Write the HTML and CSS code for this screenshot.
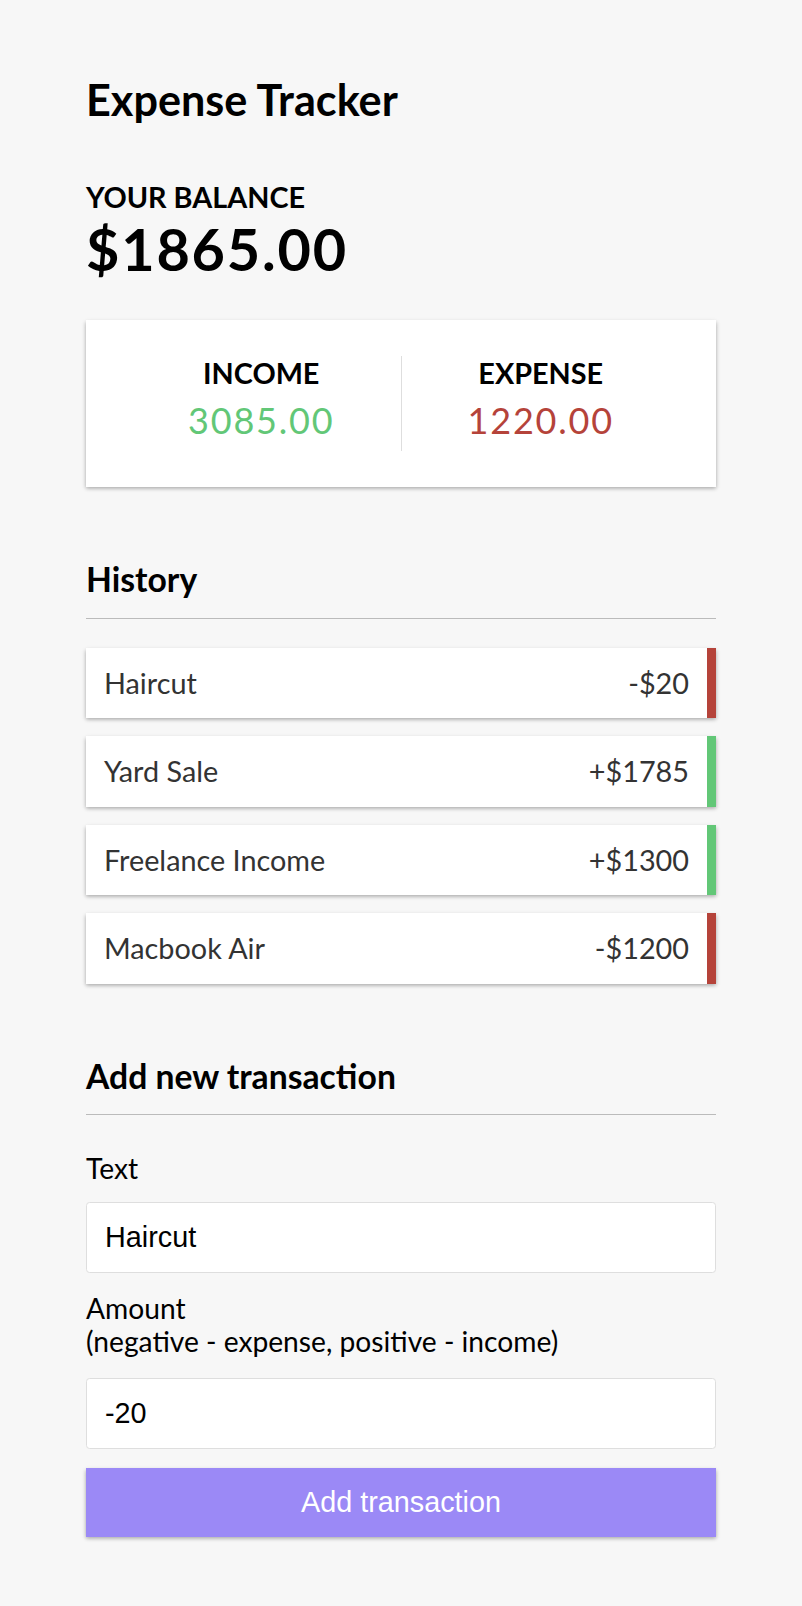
FILE: index.html
```html
<!DOCTYPE html>
<html lang="en">
<head>
<meta charset="UTF-8">
<title>Expense Tracker</title>
<link rel="stylesheet" href="styles.css">
</head>
<body>
<div class="page">
  <h2 class="title">Expense Tracker</h2>
  <div class="container">
    <h4 class="label-upper">Your Balance</h4>
    <h1 class="balance">$1865.00</h1>

    <div class="inc-exp">
      <div class="inc-exp-col first">
        <h4 class="label-upper">Income</h4>
        <p class="money plus">3085.00</p>
      </div>
      <div class="inc-exp-col">
        <h4 class="label-upper">Expense</h4>
        <p class="money minus">1220.00</p>
      </div>
    </div>

    <h3 class="section-title">History</h3>
    <ul class="list">
      <li class="item minus"><span>Haircut</span><span>-$20</span></li>
      <li class="item plus"><span>Yard Sale</span><span>+$1785</span></li>
      <li class="item plus"><span>Freelance Income</span><span>+$1300</span></li>
      <li class="item minus"><span>Macbook Air</span><span>-$1200</span></li>
    </ul>

    <h3 class="section-title">Add new transaction</h3>
    <form class="form">
      <div class="form-control">
        <label class="field-label" for="text">Text</label>
        <input class="field" type="text" id="text" value="Haircut">
      </div>
      <div class="form-control">
        <label class="field-label two-line" for="amount">Amount<br>(negative - expense, positive - income)</label>
        <input class="field" type="text" id="amount" value="-20">
      </div>
      <button class="btn" type="button">Add transaction</button>
    </form>
  </div>
</div>
</body>
</html>
```
FILE: styles.css
```css
* {
  box-sizing: border-box;
}

body {
  margin: 0;
  background-color: #f7f7f7;
  font-family: "Lato", "Noto Sans", sans-serif;
  font-size: 28.8px;
  color: #000;
}

.page {
  width: 630px;
  margin: 0 auto;
  padding: 74px 0 54px;
}

.title {
  margin: 0;
  font-size: 43.2px;
  font-weight: 700;
  line-height: 1.2;
}

.container {
  margin-top: 54px;
}

.label-upper {
  margin: 0;
  font-size: 28.8px;
  font-weight: 700;
  line-height: 1.2;
  text-transform: uppercase;
}

.balance {
  margin: 0;
  font-size: 57.6px;
  font-weight: 700;
  letter-spacing: 1.8px;
  line-height: 1.2;
}

.inc-exp {
  display: flex;
  background-color: #fff;
  box-shadow: 0 1.8px 5.4px rgba(0, 0, 0, 0.12), 0 1.8px 3.6px rgba(0, 0, 0, 0.24);
  padding: 36px;
  margin: 36px 0;
}

.inc-exp-col {
  flex: 1;
  text-align: center;
}

.inc-exp-col.first {
  border-right: 1.8px solid #dedede;
}

.money {
  font-size: 36px;
  letter-spacing: 1.8px;
  line-height: 1.2;
  margin: 9px 0;
}

.money.plus {
  color: #62c777;
}

.money.minus {
  color: #b5433a;
}

.section-title {
  font-size: 33.7px;
  font-weight: 700;
  line-height: 1.2;
  border-bottom: 1.8px solid #bbb;
  padding-bottom: 18px;
  margin: 72px 0 18px;
}

.list {
  list-style: none;
  padding: 0;
  margin: 29px 0 72px;
  display: flex;
  flex-direction: column;
  gap: 18px;
}

.item {
  display: flex;
  justify-content: space-between;
  background-color: #fff;
  color: #333;
  box-shadow: 0 1.8px 5.4px rgba(0, 0, 0, 0.12), 0 1.8px 3.6px rgba(0, 0, 0, 0.24);
  padding: 18px 18px;
  font-size: 28.8px;
  line-height: 1.2;
}

.item.plus {
  border-right: 9px solid #62c777;
}

.item.minus {
  border-right: 9px solid #b5433a;
}

.form {
  margin: 0;
}

.form-control {
  display: flex;
  flex-direction: column;
}

.field-label {
  margin: 19px 0 17px;
  font-size: 28.2px;
  line-height: 33px;
}

.field-label.two-line {
  margin-bottom: 20px;
}

.field {
  display: block;
  width: 100%;
  font-family: "Liberation Sans", Arial, sans-serif;
  font-size: 28.8px;
  padding: 18px 18px;
  border: 1.8px solid #dedede;
  border-radius: 3.6px;
  background: #fff;
  color: #000;
  outline: none;
}

.btn {
  display: block;
  width: 100%;
  margin: 19px 0 0;
  padding: 18px;
  border: 0;
  background-color: #9b89f6;
  color: #fff;
  font-family: "Liberation Sans", Arial, sans-serif;
  font-size: 28.8px;
  box-shadow: 0 1.8px 5.4px rgba(0, 0, 0, 0.12), 0 1.8px 3.6px rgba(0, 0, 0, 0.24);
}
```
